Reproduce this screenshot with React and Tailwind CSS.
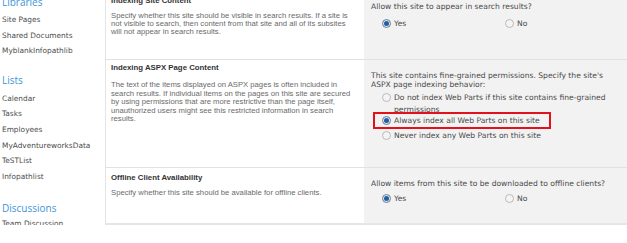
import React from "react";

const V = { fontFamily: '"DejaVu Sans", Verdana, sans-serif' };
const T = { fontFamily: '"Liberation Sans", Arial, sans-serif' };
const S = { fontFamily: '"Open Sans", "Liberation Sans", sans-serif' };

function Radio({ on }) {
  return (
    <span
      className={
        "inline-flex items-center justify-center w-[9px] h-[9px] rounded-full border shrink-0 " +
        (on ? "border-[#6d7f93] bg-[#dfe6ee]" : "border-[#b9b9b9] bg-[#f4f4f4]")
      }
    >
      {on && <span className="w-[5px] h-[5px] rounded-full bg-[#1f5fa8]" />}
    </span>
  );
}

function Opt({ on, children, className = "" }) {
  return (
    <div className={"flex items-center gap-[3px] " + className}>
      <Radio on={on} />
      <span>{children}</span>
    </div>
  );
}

const links = (items) =>
  items.map((t) => (
    <div key={t} className="h-[15.6px] leading-[15.6px] text-[7.4px] text-[#4d4d4d]" style={V}>
      {t}
    </div>
  ));

export default function App() {
  return (
    <div className="w-[627px] h-[243px] bg-white overflow-hidden relative">
      <div className="flex h-[225px]">
        {/* sidebar */}
        <div className="w-[105px] shrink-0 pl-[2px] overflow-hidden">
          <div className="-mt-[6px]">
            <div className="h-[16px] leading-[16px] text-[10px] text-[#3d95d8]" style={S}>Libraries</div>
            <div className="mt-[2px]">{links(["Site Pages", "Shared Documents", "MyblankInfopathlib"])}</div>
            <div className="mt-[13px] h-[16px] leading-[16px] text-[10px] text-[#3d95d8]" style={S}>Lists</div>
            <div className="mt-[3px]">
              {links(["Calendar", "Tasks", "Employees", "MyAdventureworksData", "TeSTList", "Infopathlist"])}
            </div>
            <div className="mt-[16px] h-[16px] leading-[16px] text-[10px] text-[#3d95d8]" style={S}>Discussions</div>
            <div className="mt-[0px]">{links(["Team Discussion"])}</div>
          </div>
        </div>
        <div className="w-[1px] bg-[#e4e4e4]" />
        {/* content */}
        <div className="flex-1 flex flex-col">
          {/* row 1 */}
          <div className="flex h-[59px]">
            <div className="w-[258px] pl-[5px] pr-[6px] overflow-hidden">
              <div className="-mt-[4px] h-[9px] leading-[9px] text-[7.8px] font-bold text-[#333]" style={T}>Indexing Site Content</div>
              <div className="mt-[7px] text-[7.7px] leading-[8.2px] text-[#6a6a6a]" style={T}>
                Specify whether this site should be visible in search results. If a site is not visible to search, then content from that site and all of its subsites will not appear in search results.
              </div>
            </div>
            <div className="flex-1 bg-[#f2f2f2] pl-[7px] text-[7.6px] text-[#4a4a4a]" style={V}>
              <div className="mt-[2px] leading-[9px]">Allow this site to appear in search results?</div>
              <div className="flex mt-[8px] pl-[11px] leading-[9px]">
                <Opt on className="w-[123px]">Yes</Opt>
                <Opt>No</Opt>
              </div>
            </div>
          </div>
          <div className="h-[1px] bg-[#e2e2e2]" />
          {/* row 2 */}
          <div className="flex h-[107px]">
            <div className="w-[258px] pl-[5px] pr-[6px]">
              <div className="mt-[3px] h-[9px] leading-[9px] text-[7.8px] font-bold text-[#333]" style={T}>Indexing ASPX Page Content</div>
              <div className="mt-[9px] text-[7.7px] leading-[8.5px] text-[#6a6a6a]" style={T}>
                The text of the items displayed on ASPX pages is often included in search results. If individual items on the pages on this site are secured by using permissions that are more restrictive than the page itself, unauthorized users might see this restricted information in search results.
              </div>
            </div>
            <div className="flex-1 bg-[#f2f2f2] pl-[7px] pr-[10px] text-[7.6px] text-[#4a4a4a]" style={V}>
              <div className="mt-[12px] leading-[8.5px]">
                This site contains fine-grained permissions. Specify the site's ASPX page indexing behavior:
              </div>
              <div className="pl-[11px] mt-[3px]">
                <div className="flex items-start gap-[3px] leading-[12px]">
                  <span className="mt-[1px]"><Radio /></span>
                  <span>Do not index Web Parts if this site contains fine-grained permissions</span>
                </div>
              </div>
              <div className="relative ml-[2px] mt-[-4px] w-[178px] h-[17px] border-2 border-[#e3111b] pl-[7px] flex items-center">
                <Opt on className="leading-[9px]">Always index all Web Parts on this site</Opt>
              </div>
              <div className="pl-[11px] mt-[2px]">
                <Opt className="leading-[9px]">Never index any Web Parts on this site</Opt>
              </div>
            </div>
          </div>
          <div className="h-[1px] bg-[#e2e2e2]" />
          {/* row 3 */}
          <div className="flex flex-1">
            <div className="w-[258px] pl-[5px] pr-[6px]">
              <div className="mt-[5px] h-[9px] leading-[9px] text-[7.8px] font-bold text-[#333]" style={T}>Offline Client Availability</div>
              <div className="mt-[7px] text-[7.7px] leading-[8.5px] text-[#6a6a6a]" style={T}>
                Specify whether this site should be available for offline clients.
              </div>
            </div>
            <div className="flex-1 bg-[#f2f2f2] pl-[7px] text-[7.6px] text-[#4a4a4a]" style={V}>
              <div className="mt-[11px] leading-[9px]">Allow items from this site to be downloaded to offline clients?</div>
              <div className="flex mt-[6px] pl-[11px] leading-[9px]">
                <Opt on className="w-[123px]">Yes</Opt>
                <Opt>No</Opt>
              </div>
            </div>
          </div>
        </div>
      </div>
      <div className="absolute left-[106px] right-0 top-[223px] h-[2px] bg-[#e6e6e6]" />
    </div>
  );
}
